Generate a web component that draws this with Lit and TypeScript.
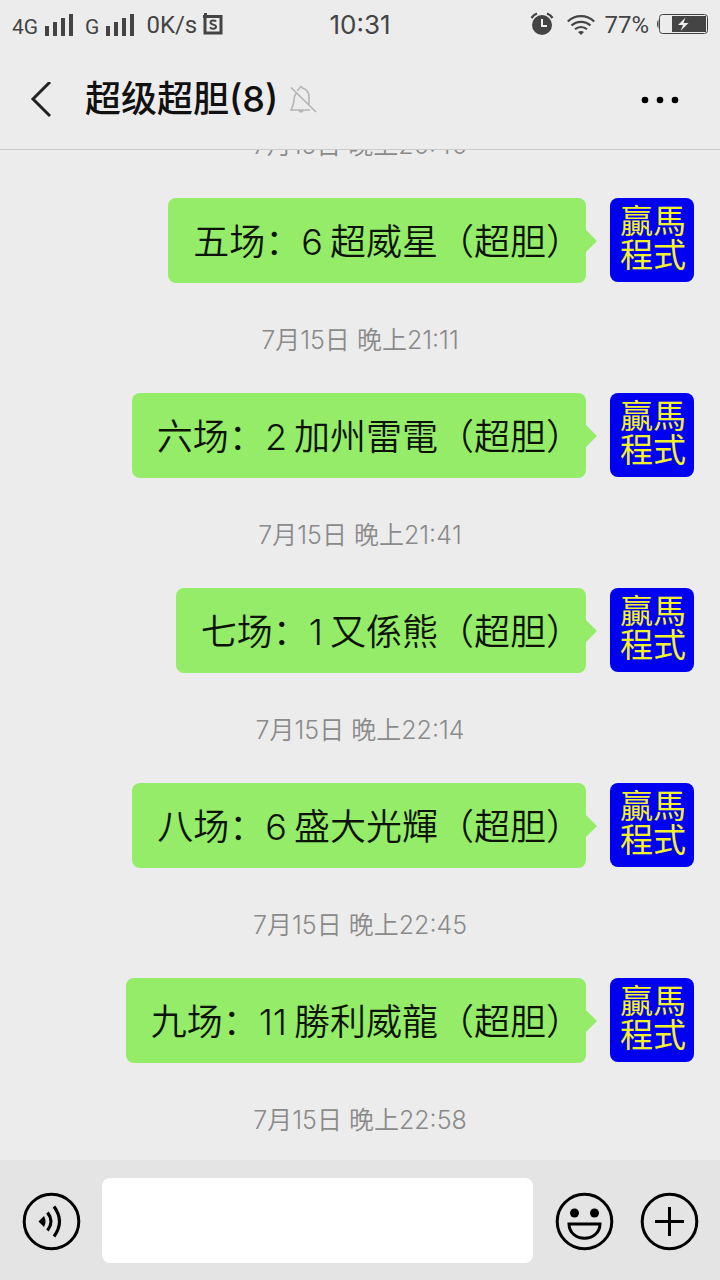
import { LitElement, html, css, svg } from "lit";
import { customElement } from "lit/decorators.js";

interface Message {
  race: string;
  pick: string;
  horse: string;
  time: string;
}

const messages: Message[] = [
  { race: "五场：", pick: "6", horse: "超威星（超胆）", time: "7月15日 晚上21:11" },
  { race: "六场：", pick: "2", horse: "加州雷電（超胆）", time: "7月15日 晚上21:41" },
  { race: "七场：", pick: "1", horse: "又係熊（超胆）", time: "7月15日 晚上22:14" },
  { race: "八场：", pick: "6", horse: "盛大光輝（超胆）", time: "7月15日 晚上22:45" },
  { race: "九场：", pick: "11", horse: "勝利威龍（超胆）", time: "7月15日 晚上22:58" },
];

const signal = html`<svg width="29" height="23" viewBox="0 0 29 23" fill="#444" aria-hidden="true">
  <rect x="0" y="13" width="4" height="10"/><rect x="8" y="9" width="4" height="14"/>
  <rect x="16" y="5" width="4" height="18"/><rect x="24" y="1" width="4" height="22"/>
</svg>`;

@customElement("status-bar")
export class StatusBar extends LitElement {
  static styles = css`
    :host { display: grid; grid-template-columns: 1fr auto 1fr; align-items: center; height: 50px; padding: 0 12px; color: #444; font: 24px/28px Roboto, "Noto Sans CJK SC", sans-serif; }
    .side { display: flex; align-items: center; }
    .end { justify-content: flex-end; }
    .net { font-size: 21px; padding-top: 4px; }
    .net + svg { margin: 0 11px 0 7px; }
    .rate { margin-right: 6px; }
    .clock { font-family: Inter, sans-serif; font-size: 26px; }
    svg { display: block; flex: none; }
    .side svg { margin-bottom: 2px; }
    .end .wifi { margin: 0 9px 0 13px; }
    .level { margin-right: 7px; }
  `;
  render() {
    return html`
      <div class="side">
        <span class="net">4G</span>${signal}
        <span class="net">G</span>${signal}
        <span class="rate">0K/s</span>
        <svg width="20" height="22" viewBox="0 0 20 22" fill="none" stroke="#444" aria-hidden="true">
          <path d="M2.500 0v5M0 3.500h18v16.500H2V3" stroke-width="3"/>
          <path d="M13 8.500c-1-1.500-5.500-1.500-5.500 1 0 2.800 5.500 1.500 5.500 4.300 0 2.500-5 2.500-6 .5" stroke-width="2"/>
        </svg>
      </div>
      <div class="clock">10:31</div>
      <div class="side end">
        <svg width="24" height="24" viewBox="0 0 24 24" aria-hidden="true">
          <circle cx="12" cy="13" r="10" fill="#444"/>
          <path d="M1.500 6A11 11 0 0 1 7 1.500M17 1.500A11 11 0 0 1 22.500 6" fill="none" stroke="#444" stroke-width="2.400"/>
          <path d="M12 7v7h5" fill="none" stroke="#ececec" stroke-width="2"/>
        </svg>
        <svg class="wifi" width="28" height="22" viewBox="0 0 28 22" fill="none" stroke="#444" stroke-width="2.200" aria-hidden="true">
          <path d="M.8 7.500a19 19 0 0 1 26.400 0M4.500 11.500a14 14 0 0 1 19 0M8 15.300a9 9 0 0 1 12 0"/>
          <path d="M11 18q3-2 6 0l-3 3z" fill="#444" stroke="none"/>
        </svg>
        <span class="level">77%</span>
        <svg width="52" height="20" viewBox="0 0 52 20" aria-hidden="true">
          <path d="M2.500 6C.5 7 .5 13 2.500 14z" fill="#444"/>
          <rect x="3.500" y=".5" width="48" height="19" rx="3" fill="none" stroke="#444"/>
          <path d="M16 2h34v16H16z" fill="#444"/>
          <path d="M29.500 3.500 22 11h5l-2.500 6 8-8h-5z" fill="#ececec"/>
        </svg>
      </div>`;
  }
}

@customElement("chat-header")
export class ChatHeader extends LitElement {
  static styles = css`
    :host { display: flex; align-items: center; height: 100px; box-sizing: border-box; padding: 0 40px 0 30px; border-bottom: 1px solid #cbcbcb; font-family: Inter, "Noto Sans CJK SC", sans-serif; color: #111; }
    button { border: 0; padding: 0; background: none; color: inherit; display: block; }
    svg { display: block; }
    h1 { margin: 0 11px 2px 33px; font-size: 36px; line-height: 48px; font-weight: 500; }
    .more { margin-left: auto; }
  `;
  render() {
    return html`
      <button aria-label="返回"><svg width="22" height="36" viewBox="0 0 22 36" fill="none" stroke="#222" stroke-width="3"><path d="M20 0 3 17l17 17"/></svg></button>
      <h1>超级超胆(8)</h1>
      <svg width="28" height="30" viewBox="0 0 28 30" fill="none" stroke="#b4b4b4" stroke-width="1.600" aria-hidden="true">
        <path d="M1 25h20M2 25c2-4 3-6 3-10 0-3 .5-4.500 2-6.500M8.500 6C9 4.500 10 4 10.500 3q1.500-3 3 0c4.500 1.500 6.500 5 6.500 9v7M10 26q2 1.500 4 0M2 2.500 27 27"/>
      </svg>
      <button class="more" aria-label="更多"><svg width="40" height="10" viewBox="0 0 40 10"><circle cx="5" cy="5" r="3.300"/><circle cx="20" cy="5" r="3.300"/><circle cx="35" cy="5" r="3.300"/></svg></button>`;
  }
}

@customElement("chat-message")
export class ChatMessage extends LitElement {
  static properties = { message: { attribute: false } };
  declare message: Message;
  static styles = css`
    :host { display: flex; justify-content: flex-end; align-items: flex-start; gap: 24px; padding: 0 26px; }
    .bubble { position: relative; box-sizing: border-box; min-height: 85px; padding: 20px 4px 17px 25px; border-radius: 8px; background: #95ec69; color: #0b1406; font: 350 36px/48px Inter, "Noto Sans CJK SC", sans-serif; font-kerning: none; }
    .bubble::after { content: ""; position: absolute; left: 100%; top: 32px; border: 11px solid transparent; border-left-color: #95ec69; border-right-width: 0; }
    .pick { margin-right: 7px; }
    .avatar { flex: none; box-sizing: border-box; width: 84px; height: 84px; padding: 4px 8px 12px 10px; border-radius: 8px; background: #0000f0; color: #f2f22c; font: 33px/34px "Noto Sans CJK TC", sans-serif; }
  `;
  render() {
    const m = this.message;
    return html`
      <div class="bubble">${m.race}<span class="pick">${m.pick}</span>${m.horse}</div>
      <div class="avatar">贏馬程式</div>`;
  }
}

@customElement("chat-composer")
export class ChatComposer extends LitElement {
  static styles = css`
    :host { display: flex; align-items: center; height: 120px; box-sizing: border-box; padding: 0 21px 0 22px; background: #e4e4e4; }
    button { flex: none; border: 0; padding: 2px 0 0; background: none; }
    svg { display: block; }
    input { flex: 1; min-width: 0; height: 85px; box-sizing: border-box; margin: 0 22px 0 21px; padding: 0 18px; border: 0; border-radius: 8px; background: #fff; font: 36px/48px Inter, "Noto Sans CJK SC", sans-serif; outline: none; }
    .plus { margin-left: 26px; }
  `;
  private icon(shapes: unknown) {
    return html`<svg width="59" height="59" viewBox="0 0 59 59" fill="none" stroke="#000" stroke-width="3"><circle cx="29.500" cy="29.500" r="27.300"/>${shapes}</svg>`;
  }
  render() {
    return html`
      <button aria-label="语音">${this.icon(svg`
        <path d="m16.500 29.500 5.500-5.500q3 5.500 0 11z" fill="#000" stroke="none"/>
        <path d="M25.500 20.500q7 9 0 18M32 14.500q11 15 0 30" stroke-width="3.200"/>`)}</button>
      <input type="text" aria-label="消息">
      <button aria-label="表情">${this.icon(svg`
        <g fill="#000" stroke="none"><circle cx="19.500" cy="21" r="4.500"/><circle cx="39.500" cy="21" r="4.500"/></g>
        <path d="M14 32h31c-.5 19-30.500 19-31 0z"/>`)}</button>
      <button class="plus" aria-label="添加">${this.icon(svg`<path d="M29.500 15v29M15 29.500h29"/>`)}</button>`;
  }
}

@customElement("app-root")
export class AppRoot extends LitElement {
  static styles = css`
    :host { display: flex; flex-direction: column; height: 100vh; overflow: hidden; background: #ececec; }
    status-bar, chat-header, chat-composer { flex: none; }
    .log { flex: 1; min-height: 0; overflow: hidden; display: flex; flex-direction: column; justify-content: flex-end; padding-bottom: 26px; }
    .log > * { flex: none; }
    time { display: block; text-align: center; color: #8a8a8a; font: 350 25px/28px Inter, "Noto Sans CJK SC", sans-serif; font-kerning: none; }
    chat-message { margin: 39px 0 43px; }
  `;
  render() {
    return html`
      <status-bar></status-bar>
      <chat-header></chat-header>
      <main class="log" lang="zh-CN">
        <time>7月15日 晚上20:40</time>
        ${messages.map((m) => html`<chat-message .message=${m}></chat-message><time>${m.time}</time>`)}
      </main>
      <chat-composer></chat-composer>`;
  }
}
